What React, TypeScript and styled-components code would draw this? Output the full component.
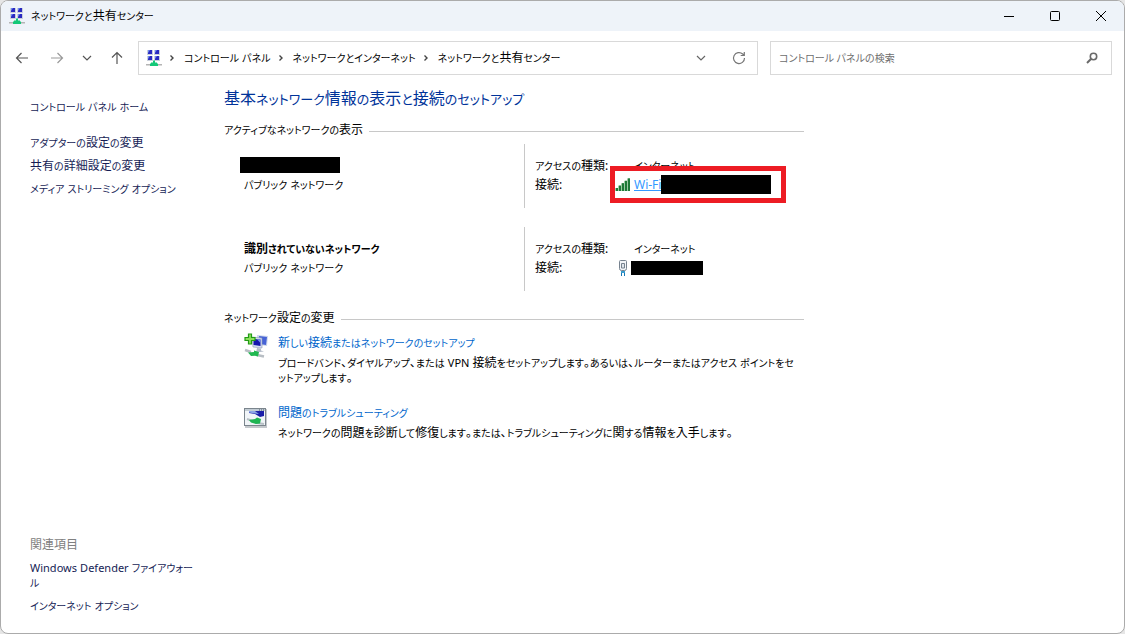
import React from "react";
import styled, { createGlobalStyle } from "styled-components";

const Global = createGlobalStyle`
  * { box-sizing: border-box; }
  body {
    margin: 0;
    background: #e6e6e6;
    color: #000;
    font-family: "Noto Sans", "Noto Sans CJK JP", sans-serif;
    font-size: 12px;
    line-height: 18px;
    font-feature-settings: "palt";
  }
  a { color: inherit; text-decoration: none; }
  button, input { font: inherit; font-feature-settings: inherit; }
  svg { display: block; flex: none; }
`;

const Window = styled.div`
  display: flex;
  flex-direction: column;
  min-height: 100vh;
  background: #fff;
  border: 1px solid #ababab;
  border-radius: 8px;
  overflow: hidden;
`;

const Kana = styled.span<{ $large?: boolean }>`
  font-size: ${(p) => (p.$large ? 13 : 10)}px;
  line-height: 1;
`;

const Latin = styled.span`
  font-size: 11px;
  line-height: 1;
`;

const TitleBar = styled.header`
  display: flex;
  align-items: center;
  height: 30px;
  padding-left: 8px;
  background: #eef3f9;
`;

const WindowTitle = styled.h1`
  flex: 1;
  margin: 0 0 0 6px;
  font-size: 12px;
  font-weight: 400;
  white-space: nowrap;
`;

const CaptionButton = styled.button`
  display: flex;
  align-items: center;
  justify-content: center;
  width: 46px;
  height: 30px;
  padding: 0;
  border: 0;
  background: none;
`;

const Toolbar = styled.div`
  display: flex;
  align-items: center;
  padding: 10px 12px 10px 14px;
`;

const NavButtons = styled.div`
  display: flex;
  align-items: center;
  width: 123px;
  flex: none;
`;

const IconButton = styled.button<{ $gap?: number }>`
  display: flex;
  padding: 0;
  margin-right: ${(p) => p.$gap ?? 0}px;
  border: 0;
  background: none;
`;

const AddressBar = styled.nav`
  display: flex;
  align-items: center;
  flex: 600 1 0;
  height: 34px;
  padding: 0 11px 0 7px;
  border: 1px solid #d9d9d9;
  white-space: nowrap;
`;

const Crumbs = styled.ol`
  display: flex;
  align-items: center;
  flex: 1;
  margin: 0;
  padding: 0;
  list-style: none;
`;

const Crumb = styled.li`
  display: flex;
  align-items: center;
  gap: 9px;
  padding-left: 7px;
`;

const SearchBox = styled.label`
  display: flex;
  align-items: center;
  flex: 320 1 0;
  height: 34px;
  margin-left: 12px;
  padding: 0 12px 0 8px;
  border: 1px solid #d9d9d9;
`;

const SearchInput = styled.input`
  flex: 1;
  min-width: 0;
  padding: 0;
  border: 0;
  outline: 0;
  background: none;
  font-size: 10px;
  &::placeholder { color: #6d6d6d; opacity: 1; }
`;

const Body = styled.div`
  display: flex;
  flex: 1;
`;

const Sidebar = styled.aside`
  display: flex;
  flex-direction: column;
  justify-content: space-between;
  flex: none;
  width: 223px;
  padding: 13px 0 20px 29px;
  color: #151c55;
`;

const SideHome = styled.a`
  display: block;
  margin-bottom: 18px;
`;

const SideList = styled.ul`
  display: flex;
  flex-direction: column;
  gap: 5px;
  margin: 0;
  padding: 0;
  list-style: none;
`;

const SideItem = styled.li`
  white-space: nowrap;
`;

const RelatedHeading = styled.h2`
  margin: 0 0 6px;
  color: #808080;
  font-size: 12px;
  font-weight: 400;
`;

const RelatedList = styled(SideList)`
  gap: 8px;
  line-height: 15px;
`;

const Main = styled.main`
  flex: 1;
  max-width: 580px;
  padding-top: 3px;
`;

const PageTitle = styled.h2`
  margin: 0 0 13px;
  color: #003399;
  font-size: 16px;
  font-weight: 400;
  line-height: 20px;
  white-space: nowrap;
`;

const SectionTitle = styled.h3`
  display: flex;
  align-items: center;
  gap: 6px;
  margin: 0;
  font-size: 12px;
  font-weight: 400;
  white-space: nowrap;
  &::after {
    content: "";
    flex: 1;
    height: 1px;
    margin-top: 2px;
    background: #c8c8c8;
  }
`;

const Networks = styled.div`
  display: flex;
  flex-direction: column;
  gap: 19px;
  padding: 5px 0 18px;
`;

const Network = styled.section`
  display: grid;
  grid-template-columns: 300px 1fr;
  height: 64px;
  line-height: 19px;
`;

const NetworkName = styled.div`
  padding: 12px 0 0 16px;
`;

const NetworkDetails = styled.div`
  padding: 12px 0 0 10px;
  border-left: 1px solid #c8c8c8;
`;

const DetailRow = styled.div`
  display: grid;
  grid-template-columns: 80px 16px 1fr;
  align-items: center;
  height: 19px;
`;

const Value = styled.span`
  grid-column: 3;
  padding-left: 3px;
`;

const Highlighted = styled.div`
  position: relative;
  grid-column: 2 / 4;
  display: grid;
  grid-template-columns: 16px 1fr;
  align-items: center;
`;

const HighlightFrame = styled.span`
  position: absolute;
  left: -5px;
  top: -9px;
  width: 176px;
  height: 37px;
  border: 5px solid #ed1c24;
`;

const ActiveLink = styled.a`
  display: flex;
  align-items: center;
  padding-left: 3px;
  color: #3399ff;
  text-decoration: underline;
`;

const Redacted = styled.span<{ $w: number; $h: number }>`
  display: block;
  width: ${(p) => p.$w}px;
  height: ${(p) => p.$h}px;
  background: #000;
`;

const NameRow = styled.div`
  height: 19px;
  padding-top: 1px;
`;

const NameText = styled.div<{ $bold?: boolean }>`
  padding-left: 4px;
  font-weight: ${(p) => (p.$bold ? 700 : 400)};
`;

const Tasks = styled.div`
  display: flex;
  flex-direction: column;
  gap: 18px;
  padding: 6px 0 0 20px;
`;

const Task = styled.article`
  display: grid;
  grid-template-columns: 24px 1fr;
  column-gap: 10px;
`;

const TaskLink = styled.a`
  display: block;
  margin-bottom: 2px;
  color: #0066cc;
  line-height: 20px;
`;

const TaskText = styled.p`
  margin: 0;
  line-height: 15px;
  white-space: nowrap;
`;

// Sets kana and Latin runs a little smaller than the kanji around them, as in a compact UI face.
const Ja = ({ text, large }: { text: string; large?: boolean }) => (
  <span>
    {text.split(/([\u3041-\u30ff]+|[A-Za-z]+)/).filter(Boolean).map((run, i) => {
      if (/^[\u3041-\u30ff]/.test(run)) return <Kana key={i} $large={large}>{run}</Kana>;
      if (/^[A-Za-z]/.test(run)) return <Latin key={i}>{run}</Latin>;
      return run;
    })}
  </span>
);

const NetworkCenterIcon = () => (
  <svg width="16" height="16" viewBox="0 0 16 16" aria-hidden="true">
    {[[2, 0], [9, 0], [2, 6], [9, 6]].map(([x, y]) => (
      <g key={`${x}-${y}`}>
        <rect x={x - 1} y={y} width="6" height="5" fill="#c9cfdc" />
        <rect x={x} y={y} width="4" height="4" fill="#2a2ac0" />
        <path d={`M${x} ${y}h2l-2 3z`} fill="#6f8af0" />
      </g>
    ))}
    <path d="M0 14h16v1.500H0z" fill="#b4b4b4" />
    <path d="M7 10.500h2v2h2v1h1V16H4v-2.500h1v-1h2z" fill="#14c878" />
  </svg>
);

const Separator = () => (
  <svg width="6" height="10" viewBox="0 0 6 10" fill="none" stroke="#444" strokeWidth="1.4" aria-hidden="true">
    <path d="M1.500 2.500L4 5L1.500 7.500" />
  </svg>
);

const SignalIcon = () => (
  <svg width="16" height="14" viewBox="0 0 16 14" aria-hidden="true">
    {[0, 1, 2, 3, 4].map((i) => (
      <g key={i}>
        <rect x={i * 3} y={10 - i * 2.4} width="3" height={3 + i * 2.4} fill="#9ccba5" />
        <rect x={1 + i * 3} y={10 - i * 2.4} width="2" height={3 + i * 2.4} fill="#1e7a38" />
      </g>
    ))}
  </svg>
);

const EthernetIcon = () => (
  <svg width="16" height="16" viewBox="0 0 16 16" aria-hidden="true">
    <path d="M4.500 1.500Q4.500.5 5.500.5h5q1 0 1 1v7q0 2-2 2h-3q-2 0-2-2z" fill="#f2f5f8" stroke="#76828f" />
    <path d="M6.500 8V3.500h3V8z" fill="#dfe5eb" stroke="#76828f" />
    <path d="M6 11h4v2H6z" fill="#3c9ccd" />
    <path d="M6.500 13v3M9.500 13v3" stroke="#1678b5" />
  </svg>
);

const SetupIcon = () => (
  <svg width="24" height="25" viewBox="0 0 24 25" aria-hidden="true">
    <path d="M13 2l11 1-1 10-9-1z" fill="#cbd5ea" />
    <path d="M15 3l8 1-1 8-6-1z" fill="#4763d6" />
    <path d="M8 4l10 1v10l-9-1z" fill="#d3dcf0" stroke="#8a97b5" strokeWidth=".6" />
    <path d="M9.500 6l7 .6V13l-7-1z" fill="#1515ad" />
    <path d="M13 6.300l3.500.3V10z" fill="#7592ee" />
    <path d="M13 15l4 .5v2l3 1-8 1z" fill="#b4bcc9" />
    <path d="M1 17l6 2M13 22l7 1.500" stroke="#b8bec4" strokeWidth="2.500" />
    <path d="M4 19.500l6-.5v-1.500l5 1.500-1 4.500-3-.8-4 .3z" fill="#20b850" />
    <path d="M4.500 1h3v3.500H11v3H7.500V11h-3V7.500H1v-3h3.500z" fill="#8be05c" stroke="#239b16" strokeWidth="1.200" />
  </svg>
);

const TroubleshootIcon = () => (
  <svg width="24" height="26" viewBox="0 -4 24 26" aria-hidden="true">
    <rect x="1" y="2" width="22" height="19" fill="#c4c8cc" />
    <rect x=".5" y="1.500" width="21" height="17" fill="#f1f5f8" stroke="#7b858d" />
    <path d="M1 2h20v2H1z" fill="#c2ccd4" />
    <path d="M15 3h1M17 3h1M19 3h1" stroke="#475866" />
    <path d="M5 4h15v5l-4 1-5-3-6-1z" fill="#1a1ea8" />
    <path d="M5 4h6l4 3-4-.5-6-1z" fill="#8ea6e6" />
    <path d="M3 12l6 2M13 16l7 1" stroke="#b6bfc5" strokeWidth="2" />
    <path d="M5 13l6-1 2-1.500 4 1.500-1 4.500-4 .5-5-1.500z" fill="#1fb552" />
  </svg>
);

const crumbs = ["コントロール パネル", "ネットワークとインターネット", "ネットワークと共有センター"];
const sideLinks = ["アダプターの設定の変更", "共有の詳細設定の変更", "メディア ストリーミング オプション"];

export default function App() {
  return (
    <Window>
      <Global />
      <TitleBar>
        <NetworkCenterIcon />
        <WindowTitle><Ja text="ネットワークと共有センター" /></WindowTitle>
        <CaptionButton aria-label="最小化">
          <svg width="10" height="10" viewBox="0 0 10 10" stroke="#000"><path d="M0 5.500h10" /></svg>
        </CaptionButton>
        <CaptionButton aria-label="最大化">
          <svg width="10" height="10" viewBox="0 0 10 10" fill="none" stroke="#000"><rect x=".5" y=".5" width="9" height="9" rx="1" /></svg>
        </CaptionButton>
        <CaptionButton aria-label="閉じる">
          <svg width="10" height="10" viewBox="0 0 10 10" stroke="#000"><path d="M0 0l10 10M10 0L0 10" /></svg>
        </CaptionButton>
      </TitleBar>

      <Toolbar>
        <NavButtons>
          <IconButton aria-label="戻る" $gap={21}>
            <svg width="14" height="14" viewBox="0 0 14 14" fill="none" stroke="#555" strokeWidth="1.200"><path d="M13 7H1.500M6.500 2l-5 5 5 5" /></svg>
          </IconButton>
          <IconButton aria-label="進む" $gap={18}>
            <svg width="14" height="14" viewBox="0 0 14 14" fill="none" stroke="#999" strokeWidth="1.200"><path d="M1 7h11.500M7.500 2l5 5-5 5" /></svg>
          </IconButton>
          <IconButton aria-label="最近表示した場所" $gap={18}>
            <svg width="10" height="10" viewBox="0 0 10 10" fill="none" stroke="#555" strokeWidth="1.200"><path d="M1 3l4 4 4-4" /></svg>
          </IconButton>
          <IconButton aria-label="上へ">
            <svg width="14" height="14" viewBox="0 0 14 14" fill="none" stroke="#555" strokeWidth="1.200"><path d="M7 13V1.500M2 6.500l5-5 5 5" /></svg>
          </IconButton>
        </NavButtons>
        <AddressBar aria-label="アドレス">
          <NetworkCenterIcon />
          <Crumbs>
            {crumbs.map((c) => (
              <Crumb key={c}><Separator /><a href="#"><Ja text={c} /></a></Crumb>
            ))}
          </Crumbs>
          <IconButton aria-label="以前の場所" $gap={26}>
            <svg width="10" height="10" viewBox="0 0 10 10" fill="none" stroke="#666" strokeWidth="1.200"><path d="M1 3l4 4 4-4" /></svg>
          </IconButton>
          <IconButton aria-label="最新の情報に更新">
            <svg width="14" height="14" viewBox="0 0 14 14" fill="none" stroke="#777" strokeWidth="1.200"><path d="M12.500 7A5.500 5.500 0 1 1 10.700 3L12 4.200M12.300 1v3.500H8.700" /></svg>
          </IconButton>
        </AddressBar>
        <SearchBox>
          <SearchInput type="search" aria-label="コントロール パネルの検索" placeholder="コントロール パネルの検索" />
          <svg width="14" height="14" viewBox="0 0 14 14" fill="none" stroke="#6a6a6a"><circle cx="8.500" cy="5.500" r="3.200" strokeWidth="1.600" /><path d="M6.200 7.800L2 12" strokeWidth="2" /></svg>
        </SearchBox>
      </Toolbar>

      <Body>
        <Sidebar>
          <nav>
            <SideHome href="#"><Ja text="コントロール パネル ホーム" /></SideHome>
            <SideList>
              {sideLinks.map((l) => <SideItem key={l}><a href="#"><Ja text={l} /></a></SideItem>)}
            </SideList>
          </nav>
          <div>
            <RelatedHeading>関連項目</RelatedHeading>
            <RelatedList>
              <SideItem><a href="#"><Ja text="Windows Defender ファイアウォー" /><br /><Ja text="ル" /></a></SideItem>
              <SideItem><a href="#"><Ja text="インターネット オプション" /></a></SideItem>
            </RelatedList>
          </div>
        </Sidebar>

        <Main>
          <PageTitle><Ja large text="基本ネットワーク情報の表示と接続のセットアップ" /></PageTitle>
          <SectionTitle><Ja text="アクティブなネットワークの表示" /></SectionTitle>
          <Networks>
            <Network>
              <NetworkName>
                <NameRow><Redacted $w={100} $h={16} /></NameRow>
                <NameText><Ja text="パブリック ネットワーク" /></NameText>
              </NetworkName>
              <NetworkDetails>
                <DetailRow><Ja text="アクセスの種類:" /><Value><Ja text="インターネット" /></Value></DetailRow>
                <DetailRow>
                  <span>接続:</span>
                  <Highlighted>
                    <SignalIcon />
                    <ActiveLink href="#">Wi-Fi<Redacted $w={110} $h={19} /></ActiveLink>
                    <HighlightFrame />
                  </Highlighted>
                </DetailRow>
              </NetworkDetails>
            </Network>
            <Network>
              <NetworkName>
                <NameText $bold><Ja text="識別されていないネットワーク" /></NameText>
                <NameText><Ja text="パブリック ネットワーク" /></NameText>
              </NetworkName>
              <NetworkDetails>
                <DetailRow><Ja text="アクセスの種類:" /><Value><Ja text="インターネット" /></Value></DetailRow>
                <DetailRow><span>接続:</span><EthernetIcon /><Redacted $w={72} $h={14} /></DetailRow>
              </NetworkDetails>
            </Network>
          </Networks>

          <SectionTitle><Ja text="ネットワーク設定の変更" /></SectionTitle>
          <Tasks>
            <Task>
              <SetupIcon />
              <div>
                <TaskLink href="#"><Ja text="新しい接続またはネットワークのセットアップ" /></TaskLink>
                <TaskText>
                  <Ja text="ブロードバンド、ダイヤルアップ、または VPN 接続をセットアップします。あるいは、ルーターまたはアクセス ポイントをセ" />
                  <br />
                  <Ja text="ットアップします。" />
                </TaskText>
              </div>
            </Task>
            <Task>
              <TroubleshootIcon />
              <div>
                <TaskLink href="#"><Ja text="問題のトラブルシューティング" /></TaskLink>
                <TaskText><Ja text="ネットワークの問題を診断して修復します。または、トラブルシューティングに関する情報を入手します。" /></TaskText>
              </div>
            </Task>
          </Tasks>
        </Main>
      </Body>
    </Window>
  );
}
